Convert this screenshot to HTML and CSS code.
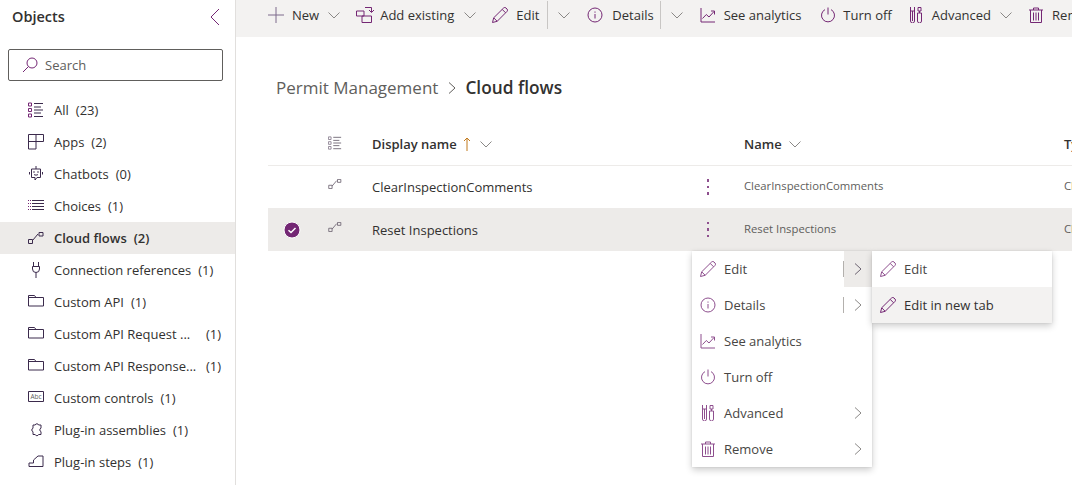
FILE: index.html
```html
<!DOCTYPE html>
<html lang="en">
<head>
<meta charset="utf-8">
<title>Cloud flows</title>
<link rel="stylesheet" href="styles.css">
</head>
<body>
<svg class="defs" width="0" height="0" aria-hidden="true">
  <defs>
    <symbol id="i-pencil" viewBox="0 0 16 16"><path d="M.5 15.500l1.200-4.700L11.600 1a1.700 1.700 0 0 1 2.400 0l1 1a1.700 1.700 0 0 1 0 2.400L5.200 14.300zM1.700 10.800l3.500 3.500M10.200 2.400l3.400 3.400" fill="none" stroke="currentColor"/></symbol>
    <symbol id="i-info" viewBox="0 0 16 16"><circle cx="8" cy="8" r="7" fill="none" stroke="currentColor"/><path d="M8 7v4.500M8 4.500v1.200" fill="none" stroke="currentColor"/></symbol>
    <symbol id="i-chart" viewBox="0 0 16 16"><path d="M1 1v14h14M2.500 11.500l3.800-4 2.700 2.500 5-5.500M11 4h3.500v3.500" fill="none" stroke="currentColor"/></symbol>
    <symbol id="i-power" viewBox="0 0 16 16"><path d="M8 .5v7M5 2.600a6.500 6.500 0 1 0 6 0" fill="none" stroke="currentColor"/></symbol>
    <symbol id="i-tools" viewBox="0 0 16 16"><path d="M2.500 0v4M6.500 0v4M2.500 4h4v10a2 2 0 0 1-4 0zM4.500 4v10M10 .5h3V4h-3zM11.500 4v2M9.500 6h4v8a2 2 0 0 1-4 0z" fill="none" stroke="currentColor"/></symbol>
    <symbol id="i-trash" viewBox="0 0 16 16"><path d="M1 3h14M5.500 3V1h5v2M2.500 3v12.500h11V3M5.500 5.500v8M8 5.500v8M10.500 5.500v8" fill="none" stroke="currentColor"/></symbol>
    <symbol id="i-flow" viewBox="0 0 16 12"><path d="M.5 7.500h4v4h-4zM11 .5h4v3.500h-4zM4.500 8.500L10 2" fill="none" stroke="currentColor"/></symbol>
    <symbol id="i-folder" viewBox="0 0 16 16"><path d="M.5 12V1.500h6l1.500 2h7.500V12zM.5 3.500h7.500" fill="none" stroke="currentColor"/></symbol>
    <symbol id="i-chev" viewBox="0 0 12 12"><path d="M.5 3.500L6 9l5.500-5.500" fill="none" stroke="currentColor"/></symbol>
    <symbol id="i-right" viewBox="0 0 12 12"><path d="M3 .5L9 6l-6 5.500" fill="none" stroke="currentColor"/></symbol>
    <symbol id="i-list" viewBox="0 0 16 16"><path class="sq" d="M.5 1h3v3h-3zM.5 6.500h3v3h-3zM.5 12h3v3h-3z" fill="none"/><path d="M6 1.500h9M6 5h7M6 8h9M6 11h7M6 14.500h9" fill="none" stroke="currentColor"/></symbol>
  </defs>
</svg>
<div class="app">
  <aside class="side">
    <div class="side-head">
      <span class="side-title">Objects</span>
      <svg class="collapse" viewBox="0 0 10 18"><path d="M9 1L1 9l8 8" fill="none" stroke="currentColor"/></svg>
    </div>
    <div class="search">
      <svg class="search-ic" viewBox="0 0 16 16"><circle cx="10" cy="6" r="5" fill="none" stroke="#742774"/><path d="M6.500 9.500L1 15" fill="none" stroke="#742774"/></svg>
      <span>Search</span>
    </div>
    <ul class="nav">
      <li class="nav-row"><svg class="nav-ic"><use href="#i-list"/></svg><span class="nav-name">All</span><span>(23)</span></li>
      <li class="nav-row"><svg class="nav-ic" viewBox="0 0 16 16"><path d="M.5 .5h15v7H8v7.500H.5zM.5 7.500H8M8 .5v7" fill="none" stroke="currentColor"/></svg><span class="nav-name">Apps</span><span>(2)</span></li>
      <li class="nav-row"><svg class="nav-ic" viewBox="0 0 16 16"><path d="M8 0v3M3.500 3h9v8.500H9l-2 2.500v-2.500H3.500zM1.500 6v2.500M14.500 6v2.500M6 8.500c1 .8 3 .8 4 0" fill="none" stroke="currentColor"/><circle cx="6" cy="6" r=".8" fill="currentColor"/><circle cx="10" cy="6" r=".8" fill="currentColor"/></svg><span class="nav-name">Chatbots</span><span>(0)</span></li>
      <li class="nav-row"><svg class="nav-ic" viewBox="0 0 16 16"><path d="M4 2.500h12M4 5.500h12M4 8.500h12M4 11.500h12" fill="none" stroke="currentColor"/><path d="M0 2.500h3M0 5.500h3M0 8.500h3M0 11.500h3" fill="none" stroke="#742774" stroke-dasharray="1 1"/></svg><span class="nav-name">Choices</span><span>(1)</span></li>
      <li class="nav-row is-active"><svg class="nav-ic nav-flow"><use href="#i-flow"/></svg><span class="nav-name">Cloud flows</span><span>(2)</span></li>
      <li class="nav-row"><svg class="nav-ic" viewBox="0 0 16 16"><path d="M5.500 0v4.500M10.500 0v4.500M4.500 4.500h7V7a3.500 3.500 0 0 1-7 0zM8 10.500V16" fill="none" stroke="currentColor"/></svg><span class="nav-name">Connection references</span><span>(1)</span></li>
      <li class="nav-row"><svg class="nav-ic"><use href="#i-folder"/></svg><span class="nav-name">Custom API</span><span>(1)</span></li>
      <li class="nav-row"><svg class="nav-ic"><use href="#i-folder"/></svg><span class="nav-name nav-trunc">Custom API Request ...</span><span>(1)</span></li>
      <li class="nav-row"><svg class="nav-ic"><use href="#i-folder"/></svg><span class="nav-name nav-trunc">Custom API Response...</span><span>(1)</span></li>
      <li class="nav-row"><svg class="nav-ic" viewBox="0 0 16 16"><path d="M.5 1.500h15v10H.5z" fill="none" stroke="currentColor"/><text x="8" y="8.800" class="abc">Abc</text></svg><span class="nav-name">Custom controls</span><span>(1)</span></li>
      <li class="nav-row"><svg class="nav-ic" viewBox="0 0 16 16"><path d="M5 3H7.200a1.800 1.800 0 0 1 3.400 0H13v3.200a1.800 1.800 0 0 0 0 3.400V12.500H10.600a1.800 1.800 0 0 1-3.400 0H5V9.700a1.800 1.800 0 0 1 0-3.400z" fill="none" stroke="currentColor" stroke-linejoin="round"/></svg><span class="nav-name">Plug-in assemblies</span><span>(1)</span></li>
      <li class="nav-row"><svg class="nav-ic" viewBox="0 0 16 16"><path d="M1 12.500V9h4.500V6l4.500-4h5v10.500z" fill="none" stroke="currentColor"/></svg><span class="nav-name">Plug-in steps</span><span>(1)</span></li>
    </ul>
  </aside>

  <main class="main">
    <div class="toolbar">
      <span class="tool tool-new"><svg class="t-ic plus" viewBox="0 0 16 16"><path d="M8 0v16M0 8h16" fill="none" stroke="currentColor"/></svg>New<svg class="t-chev"><use href="#i-chev"/></svg></span>
      <span class="tool tool-add"><svg class="t-ic" viewBox="0 0 16 16"><path d="M.5 4h7.500v5M.5 4v5h7.500M6 15.500h9.500V9H6zM9 .5h6.500V5M13 3l2.500 2.500L18 3" fill="none" stroke="currentColor"/></svg>Add existing<svg class="t-chev"><use href="#i-chev"/></svg></span>
      <span class="tool tool-edit"><svg class="t-ic"><use href="#i-pencil"/></svg>Edit</span>
      <span class="t-div t-div-edit"></span>
      <svg class="t-chev t-split"><use href="#i-chev"/></svg>
      <span class="tool tool-details"><svg class="t-ic"><use href="#i-info"/></svg>Details</span>
      <span class="t-div t-div-details"></span>
      <svg class="t-chev t-split"><use href="#i-chev"/></svg>
      <span class="tool tool-chart"><svg class="t-ic"><use href="#i-chart"/></svg>See analytics</span>
      <span class="tool tool-power"><svg class="t-ic"><use href="#i-power"/></svg>Turn off</span>
      <span class="tool tool-adv"><svg class="t-ic"><use href="#i-tools"/></svg>Advanced<svg class="t-chev"><use href="#i-chev"/></svg></span>
      <span class="tool tool-trash"><svg class="t-ic"><use href="#i-trash"/></svg>Remove</span>
    </div>

    <div class="crumbs">
      <span class="crumb-parent">Permit Management</span>
      <svg class="crumb-sep" viewBox="0 0 12 12"><path d="M3 .5L9 6l-6 5.500" fill="none" stroke="currentColor"/></svg>
      <span class="crumb-current">Cloud flows</span>
    </div>

    <div class="table">
      <div class="tr th">
        <span class="c-check"></span>
        <span class="c-type"><svg class="list-ic"><use href="#i-list"/></svg></span>
        <span class="c-display">Display name<svg class="sort" viewBox="0 0 8 14"><path d="M4 14V1M1 4l3-3 3 3" fill="none" stroke="currentColor"/></svg><svg class="t-chev"><use href="#i-chev"/></svg></span>
        <span class="c-name">Name<svg class="t-chev"><use href="#i-chev"/></svg></span>
        <span class="c-kind">Type</span>
      </div>
      <div class="tr">
        <span class="c-check"></span>
        <span class="c-type"><svg class="flow-ic"><use href="#i-flow"/></svg></span>
        <span class="c-display"><span class="c-label">ClearInspectionComments</span><span class="dots"><i></i><i></i><i></i></span></span>
        <span class="c-name small">ClearInspectionComments</span>
        <span class="c-kind small">Cloud flow</span>
      </div>
      <div class="tr is-selected">
        <span class="c-check"><svg class="check" viewBox="0 0 18 18"><circle cx="9" cy="9" r="8" fill="#742774" stroke="#fff"/><path d="M5.500 9.200l2.500 2.300 4.500-4.500" fill="none" stroke="#fff" stroke-width="1.500"/></svg></span>
        <span class="c-type"><svg class="flow-ic"><use href="#i-flow"/></svg></span>
        <span class="c-display"><span class="c-label">Reset Inspections</span><span class="dots"><i></i><i></i><i></i></span></span>
        <span class="c-name small">Reset Inspections</span>
        <span class="c-kind small">Cloud flow</span>
      </div>
    </div>
  </main>
</div>

<div class="menu menu-main">
  <div class="m-item"><svg class="m-ic"><use href="#i-pencil"/></svg><span class="m-text">Edit</span><span class="m-bar"></span><span class="m-arrow is-open"><svg><use href="#i-right"/></svg></span></div>
  <div class="m-item"><svg class="m-ic"><use href="#i-info"/></svg><span class="m-text">Details</span><span class="m-bar"></span><span class="m-arrow"><svg><use href="#i-right"/></svg></span></div>
  <div class="m-item"><svg class="m-ic"><use href="#i-chart"/></svg><span class="m-text">See analytics</span></div>
  <div class="m-item"><svg class="m-ic"><use href="#i-power"/></svg><span class="m-text">Turn off</span></div>
  <div class="m-item"><svg class="m-ic"><use href="#i-tools"/></svg><span class="m-text">Advanced</span><span class="m-arrow"><svg><use href="#i-right"/></svg></span></div>
  <div class="m-item"><svg class="m-ic"><use href="#i-trash"/></svg><span class="m-text">Remove</span><span class="m-arrow"><svg><use href="#i-right"/></svg></span></div>
</div>
<div class="menu menu-sub">
  <div class="m-item"><svg class="m-ic"><use href="#i-pencil"/></svg><span class="m-text">Edit</span></div>
  <div class="m-item is-hover"><svg class="m-ic"><use href="#i-pencil"/></svg><span class="m-text">Edit in new tab</span></div>
</div>
</body>
</html>
```
FILE: styles.css
```css
* { box-sizing: border-box; }
html, body { margin: 0; height: 100%; overflow: hidden; background: #fff; }
body { font: 13px/18px "Open Sans", "Noto Sans", sans-serif; color: #323130; }
.defs { position: absolute; }
svg { display: block; flex: none; }
.sq { stroke: var(--sq, #742774); }

.app { display: flex; height: 485px; }
.side { width: 236px; flex: none; border-right: 1px solid #e1dfdd; }
.side-head { display: flex; justify-content: space-between; align-items: center; height: 33px; padding: 0 15px 0 12px; }
.side-title { font-size: 14.500px; font-weight: 600; }
.collapse { width: 10px; height: 18px; color: #742774; }
.search { display: flex; align-items: center; gap: 7px; margin: 16px 12px 0 8px; height: 32px; padding-left: 13px; border: 1px solid #605e5c; border-radius: 2px; color: #605e5c; }
.search-ic { width: 16px; height: 16px; }
.nav { list-style: none; margin: 13px 0 0; padding: 0; }
.nav-row { display: flex; align-items: center; height: 32px; padding-left: 28px; }
.nav-ic { width: 16px; height: 16px; margin-right: 10px; color: #3b2a4c; overflow: visible; }
.nav-flow { height: 12px; margin-bottom: 1px; }
.nav-name { margin-right: 7px; }
.nav-trunc { width: 145px; white-space: nowrap; overflow: hidden; }
.is-active { background: #edebe9; font-weight: 600; }
.abc { font-size: 6.500px; text-anchor: middle; fill: #605e5c; }

.main { flex: 1; min-width: 0; overflow: hidden; }
.toolbar { display: flex; align-items: center; height: 37px; background: #f3f2f1; padding: 0 0 7px 32px; white-space: nowrap; overflow: hidden; }
.tool { display: inline-flex; align-items: center; gap: 8px; flex: none; }
.t-ic { width: 16px; height: 16px; color: #742774; overflow: visible; }
.plus { color: #7d6b8c; }
.t-chev { width: 12px; height: 12px; color: #8a8886; }
.tool .t-chev { margin-left: 1px; }
.tool-add { margin-left: 16px; }
.tool-add .t-chev { margin-left: 2px; }
.tool-edit { margin-left: 16px; }
.t-div { width: 1px; height: 28px; background: #c8c6c4; flex: none; }
.t-div-edit { margin-left: 8px; }
.t-div-details { margin-left: 6px; }
.t-split { margin-left: 10px; }
.tool-details { margin-left: 17px; gap: 9px; }
.tool-chart { margin-left: 17px; }
.tool-power { margin-left: 19px; gap: 7px; }
.tool-adv { margin-left: 16px; gap: 8px; }
.tool-trash { margin-left: 16px; }

.crumbs { display: flex; align-items: center; margin: 39px 0 0 40px; height: 24px; }
.crumb-parent { font-size: 17px; color: #605e5c; }
.crumb-sep { width: 12px; height: 12px; margin: 0 7px 0 8px; color: #605e5c; }
.crumb-current { font-size: 17.300px; font-weight: 600; }

.table { margin: 22px 0 0 32px; width: 900px; }
.tr { display: flex; align-items: center; height: 43px; }
.th { height: 44px; border-bottom: 1px solid #edebe9; font-weight: 600; }
.th + .tr { height: 42px; }
.c-check { width: 48px; flex: none; display: flex; justify-content: center; }
.c-type { width: 56px; flex: none; padding-left: 12px; }
.c-display { width: 372px; flex: none; display: flex; align-items: center; }
.c-label { width: 335px; }
.c-name { width: 320px; flex: none; display: flex; align-items: center; }
.c-kind { flex: none; }
.small { font-size: 11.300px; color: #605e5c; padding-bottom: 2px; }
.sort { width: 8px; height: 14px; color: #c27a1d; margin: 0 9px 0 6px; }
.c-name .t-chev { margin-left: 7px; }
.is-selected { background: #edebe9; }
.check { width: 18px; height: 18px; }
.list-ic { --sq: #8a7f90; width: 14px; height: 14px; margin-bottom: 2px; color: #6b6270; }
.flow-ic { width: 14px; height: 10px; margin-bottom: 6px; color: #6b6270; }
.dots { display: flex; flex-direction: column; gap: 4px; }
.dots i { width: 2px; height: 2.500px; background: #8e4f8e; }

.menu { position: absolute; top: 251px; background: #fff; box-shadow: 0 3px 7px rgba(0, 0, 0, .2), 0 0 2px rgba(0, 0, 0, .1); }
.menu-main { left: 692px; width: 180px; }
.menu-sub { left: 872px; width: 180px; }
.m-item { display: flex; align-items: center; height: 36px; padding-left: 8px; color: #484644; }
.m-ic { width: 16px; height: 16px; margin-right: 8px; color: #8e4f8e; overflow: visible; }
.m-text { flex: 1; }
.m-bar { width: 1px; height: 16px; background: #b3b0ad; }
.m-arrow { width: 28px; height: 36px; display: flex; align-items: center; justify-content: center; color: #8a8886; }
.m-arrow svg { width: 12px; height: 12px; }
.is-open { background: #edebe9; color: #6b6270; }
.is-hover { background: #f3f2f1; color: #323130; }
.is-hover .m-ic { color: #742774; }
```
